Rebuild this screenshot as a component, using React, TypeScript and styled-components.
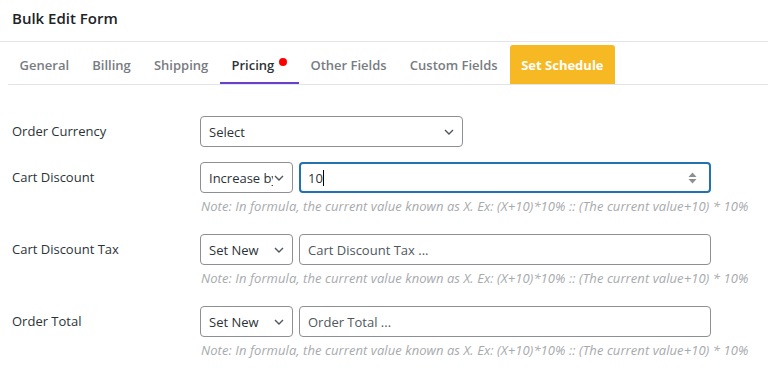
import React from "react";
import styled, { createGlobalStyle } from "styled-components";

const GlobalStyle = createGlobalStyle`
  body {
    margin: 0;
    background: #fff;
    font-family: "Open Sans", "Liberation Sans", sans-serif;
  }
`;

const Page = styled.div`
  width: 768px;
  background: #fff;
`;

const Header = styled.div`
  height: 42px;
  display: flex;
  align-items: center;
  padding: 0 0 5px 12px;
  border-bottom: 1px solid #e2e4e7;
  box-sizing: border-box;
`;

const Title = styled.h1`
  margin: 0;
  font-size: 15px;
  font-weight: 600;
  color: #1d2327;
`;

const TabBar = styled.div`
  display: flex;
  align-items: stretch;
  margin-left: 8px;
  padding-top: 3px;
  border-bottom: 1px solid #e2e4e7;
`;

const Tab = styled.div<{ $active?: boolean }>`
  height: 39px;
  display: flex;
  align-items: center;
  padding: 2px 11.6px 0;
  font-size: 13px;
  font-weight: 600;
  color: ${(p) => (p.$active ? "#2c3338" : "#787c82")};
  box-sizing: border-box;
  border-bottom: 2px solid ${(p) => (p.$active ? "#6741c9" : "transparent")};
  margin-bottom: -1px;
`;

const Dot = styled.span`
  width: 8px;
  height: 8px;
  border-radius: 50%;
  background: #f00;
  margin: -6px 0 0 5px;
`;

const ScheduleTab = styled.div`
  height: 39px;
  display: flex;
  align-items: center;
  padding: 1px 11px 0;
  box-sizing: border-box;
  margin-left: 1px;
  font-size: 13px;
  font-weight: 700;
  color: #fff;
  background: #f6b823;
  border-radius: 3px 3px 0 0;
`;

const Form = styled.div`
  padding: 31px 12px 0;
`;

const Field = styled.div`
  display: grid;
  grid-template-columns: 188px 1fr;
  margin-bottom: 15px;
`;

const Label = styled.div`
  height: 30px;
  display: flex;
  align-items: center;
  font-size: 13px;
  color: #2c3338;
`;

const Controls = styled.div`
  display: flex;
  gap: 6px;
`;

const SelectBox = styled.div<{ $width: number }>`
  width: ${(p) => p.$width}px;
  height: 31px;
  box-sizing: border-box;
  border: 1px solid #8c8f94;
  border-radius: 4px;
  display: flex;
  align-items: center;
  padding: 0 8px 0 8px;
  font-size: 13px;
  color: #2c3338;
  overflow: hidden;
  white-space: nowrap;
`;

const SelectText = styled.span`
  overflow: hidden;
  flex: 1;
  margin-right: 1px;
`;

const InputBox = styled.div<{ $focus?: boolean }>`
  width: 412px;
  height: 31px;
  box-sizing: border-box;
  border: ${(p) => (p.$focus ? "2px solid #2271b1" : "1px solid #8c8f94")};
  border-radius: 4px;
  display: flex;
  align-items: center;
  padding: 0 ${(p) => (p.$focus ? "12px 0 7px" : "8px")};
  font-size: 13px;
  color: #2c3338;
`;

const Placeholder = styled.span`
  color: #50575e;
  flex: 1;
`;

const Value = styled.span`
  flex: 1;
  display: flex;
  align-items: center;
`;

const Caret = styled.span`
  width: 1px;
  height: 16px;
  background: #000;
`;

const Note = styled.div`
  grid-column: 2;
  margin: 5px 0 4px 1px;
  font-size: 13px;
  line-height: 17px;
  font-style: italic;
  letter-spacing: 0.07px;
  color: #a7aaad;
  white-space: nowrap;
`;

const Chevron = () => (
  <svg width="10" height="6" viewBox="0 0 10 6" style={{ flexShrink: 0 }}>
    <path d="M1 1l4 4 4-4" fill="none" stroke="#50575e" strokeWidth="1.4" />
  </svg>
);

const Spinner = () => (
  <svg width="9" height="12" viewBox="0 0 9 12">
    <path d="M4.5 0.5L8.5 5H0.5z" fill="#8c8f94" />
    <path d="M4.5 11.5L8.5 7H0.5z" fill="#8c8f94" />
  </svg>
);

const NOTE =
  "Note: In formula, the current value known as X. Ex: (X+10)*10% :: (The current value+10) * 10%";

const tabs = ["General", "Billing", "Shipping", "Pricing", "Other Fields", "Custom Fields"];

export default function App() {
  return (
    <Page>
      <GlobalStyle />
      <Header>
        <Title>Bulk Edit Form</Title>
      </Header>
      <TabBar>
        {tabs.map((t) => (
          <Tab key={t} $active={t === "Pricing"}>
            {t}
            {t === "Pricing" && <Dot />}
          </Tab>
        ))}
        <ScheduleTab>Set Schedule</ScheduleTab>
      </TabBar>
      <Form>
        <Field>
          <Label>Order Currency</Label>
          <Controls>
            <SelectBox $width={263}>
              <SelectText>Select</SelectText>
              <Chevron />
            </SelectBox>
          </Controls>
        </Field>
        <Field>
          <Label>Cart Discount</Label>
          <Controls>
            <SelectBox $width={93}>
              <SelectText>Increase by</SelectText>
              <Chevron />
            </SelectBox>
            <InputBox $focus>
              <Value>
                10
                <Caret />
              </Value>
              <Spinner />
            </InputBox>
          </Controls>
          <Note>{NOTE}</Note>
        </Field>
        <Field>
          <Label>Cart Discount Tax</Label>
          <Controls>
            <SelectBox $width={93}>
              <SelectText>Set New</SelectText>
              <Chevron />
            </SelectBox>
            <InputBox>
              <Placeholder>Cart Discount Tax ...</Placeholder>
            </InputBox>
          </Controls>
          <Note>{NOTE}</Note>
        </Field>
        <Field>
          <Label>Order Total</Label>
          <Controls>
            <SelectBox $width={93}>
              <SelectText>Set New</SelectText>
              <Chevron />
            </SelectBox>
            <InputBox>
              <Placeholder>Order Total ...</Placeholder>
            </InputBox>
          </Controls>
          <Note>{NOTE}</Note>
        </Field>
      </Form>
    </Page>
  );
}
